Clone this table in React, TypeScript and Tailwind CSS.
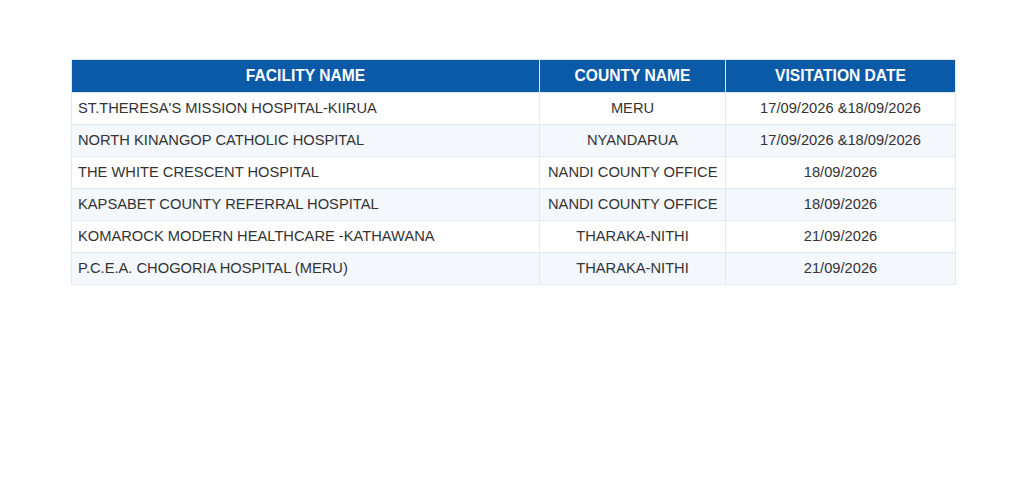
import React from "react";

const rows = [
  ["ST.THERESA'S MISSION HOSPITAL-KIIRUA", "MERU", "17/09/2026 &18/09/2026"],
  ["NORTH KINANGOP CATHOLIC HOSPITAL", "NYANDARUA", "17/09/2026 &18/09/2026"],
  ["THE WHITE CRESCENT HOSPITAL", "NANDI COUNTY OFFICE", "18/09/2026"],
  ["KAPSABET COUNTY REFERRAL HOSPITAL", "NANDI COUNTY OFFICE", "18/09/2026"],
  ["KOMAROCK MODERN HEALTHCARE -KATHAWANA", "THARAKA-NITHI", "21/09/2026"],
  ["P.C.E.A. CHOGORIA HOSPITAL (MERU)", "THARAKA-NITHI", "21/09/2026"],
];

export default function App() {
  return (
    <div
      className="w-[1024px] h-[480px] bg-white pt-[59px] pl-[71px]"
      style={{ fontFamily: '"Liberation Sans", Arial, sans-serif' }}
    >
      <table className="w-[884px] border-collapse text-[14.7px] text-[#333333] table-fixed">
        <colgroup>
          <col className="w-[468px]" />
          <col className="w-[186px]" />
          <col className="w-[230px]" />
        </colgroup>
        <thead>
          <tr className="h-[33px] bg-[#0b5aa8] text-white font-bold text-[15.6px]">
            <th className="border border-[#dfe8f1] text-center px-2">FACILITY NAME</th>
            <th className="border border-[#dfe8f1] text-center px-2">COUNTY NAME</th>
            <th className="border border-[#dfe8f1] text-center px-2">VISITATION DATE</th>
          </tr>
        </thead>
        <tbody>
          {rows.map((r, i) => (
            <tr
              key={i}
              className={`h-[32px] ${i % 2 === 0 ? "bg-white" : "bg-[#f4f7fb]"}`}
            >
              <td className="border border-[#e1e8f0] text-left pl-[6px] pr-2 whitespace-nowrap">{r[0]}</td>
              <td className="border border-[#e1e8f0] text-center px-2 whitespace-nowrap">{r[1]}</td>
              <td className="border border-[#e1e8f0] text-center px-2 whitespace-nowrap">{r[2]}</td>
            </tr>
          ))}
        </tbody>
      </table>
    </div>
  );
}
